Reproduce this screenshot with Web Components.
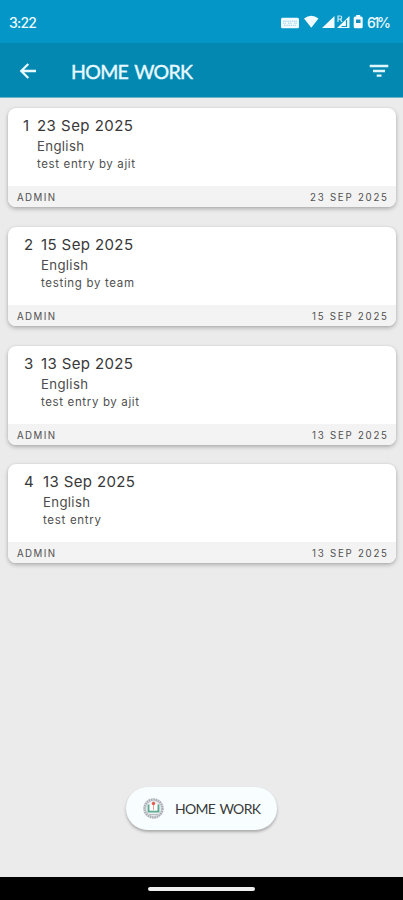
<!DOCTYPE html>
<html lang="en"><head><meta charset="utf-8"><title>Home Work</title>
<style>html,body{margin:0;height:100%;overflow:hidden}body{font-family:Inter,"Noto Sans",sans-serif}</style></head>
<body><home-screen></home-screen>
<script>
const attach=(el,html)=>{el.attachShadow({mode:'open'}).innerHTML=html};

/* A single line of text tracked out to the width given in its "w" attribute. */
customElements.define('track-text',class extends HTMLElement{
  connectedCallback(){
    if(this.shadowRoot)return;
    attach(this,`<style>:host{display:block;white-space:nowrap;width:max-content}span{display:inline-block}</style><span><slot></slot></span>`);
    const s=this.shadowRoot.querySelector('span'),n=this.textContent.length;
    const gap=(Number(this.getAttribute('w'))-s.getBoundingClientRect().width)/(n-1);
    s.style.letterSpacing=gap+'px';s.style.marginRight=-gap+'px';
  }
});

customElements.define('status-bar',class extends HTMLElement{
  connectedCallback(){attach(this,`<style>
:host{display:flex;height:43px;box-sizing:border-box;padding:1px 12px 0 9px;align-items:center;justify-content:space-between;background:#0396c6;color:#eefaff;font-size:14px;font-weight:500}
svg{display:block}.r{display:flex;align-items:center;gap:3px}
</style><track-text w="28">3:22</track-text><div class="r">
<svg width="84" height="16" viewBox="280 14 84 16" fill="#f2fbff">
<rect x="281" y="17.700" width="18" height="10.500" rx="1.500"/>
<path d="M283 21.200h14M283 23.200h3M288 23.200h4M294 23.200h3M284 25.300h12" stroke="#9ad2e6" stroke-width="1" stroke-dasharray="1.500 .7"/>
<path d="M304 18.500Q311.300 12.800 318.500 18.500L311.300 27.700Z"/>
<path d="M334.500 16v12h-12.500Z"/>
<path d="M349.500 16v12h-12.500Z"/>
<path d="M346.500 20v6.500h-5" fill="none" stroke="#0396c6" stroke-width="1.200"/>
<path d="M338 22v-6h2.200q1.500 0 1.500 1.600t-1.500 1.600H338m2.200 0 1.800 2.600" fill="none" stroke="#c6e9f4" stroke-width="1.200"/>
<path d="M356.200 15h4v1.500h1q1.500 0 1.500 1.500v8.700q0 1.500-1.500 1.500h-6q-1.500 0-1.500-1.500V18q0-1.500 1.500-1.500h1Z"/>
<path d="M356 19.500h4.500v3.500H356Z" fill="#168dba"/>
</svg><track-text w="24">61%</track-text></div>`)}
});

customElements.define('app-bar',class extends HTMLElement{
  connectedCallback(){attach(this,`<style>
:host{display:flex;height:55px;box-sizing:border-box;align-items:center;padding:2px 14px 0 19px;background:#0388b2;border-bottom:1px solid #70b2c6;color:#e8faff}
.t{flex:1;margin-left:34px;font:400 19.500px Lato,sans-serif;word-spacing:2px;-webkit-text-stroke:.4px}svg{display:block}
</style><svg width="18" height="18" viewBox="0 0 18 18" fill="none" stroke="#e9faff" stroke-width="2.300"><path d="M17 9H2.500M9.300 2 2.300 9l7 7"/></svg>
<div class="t"><track-text w="122">HOME WORK</track-text></div>
<svg width="20" height="16" viewBox="0 0 20 16" fill="none" stroke="#def6fc" stroke-width="2.300"><path d="M.7 3h18.600M4 8h12M7.700 12.600h4.800"/></svg>`)}
});

customElements.define('homework-card',class extends HTMLElement{
  connectedCallback(){
    const a=k=>this.getAttribute(k);
    attach(this,`<style>
:host{display:flex;flex-direction:column;height:99px;border-radius:8px;background:#fff;overflow:hidden;box-shadow:0 2px 4px rgba(0,0,0,.26),0 0 2px rgba(0,0,0,.08)}
.b{display:flex;flex:1;padding:9px 0 0 15px;color:#383838}
.n{font-size:15px;line-height:18px;width:${a('indent')}px;box-sizing:border-box;padding-left:${a('n')==='1'?0:1}px}
.s{font-size:13.200px;line-height:17px;margin-top:3px;color:#4c4c4c}.d{font-size:15px;line-height:18px}
.m{font-size:11.500px;line-height:15px;margin-top:2px;color:#505050}
.f{height:21px;display:flex;align-items:center;justify-content:space-between;padding:2px 9px 0;box-sizing:border-box;background:#f3f3f3;color:#505050;font-size:9.700px}
</style><div class="b"><div class="n">${a('n')}</div><div><track-text class="d" w="${a('dw')}">${a('date')}</track-text><track-text class="s" w="47">English</track-text><track-text class="m" w="${a('mw')}">${this.textContent||a('note')}</track-text></div></div>
<div class="f"><track-text w="38">ADMIN</track-text><track-text w="${a('fw')}">${a('date').toUpperCase()}</track-text></div>`);
  }
});

customElements.define('title-chip',class extends HTMLElement{
  connectedCallback(){attach(this,`<style>
:host{display:flex;align-items:center;width:151px;height:43px;box-sizing:border-box;padding:0 16px;border-radius:22px;background:#f8fdff;box-shadow:0 2px 3px rgba(0,0,0,.28);color:#3a3a3a;font:14px Lato,sans-serif;word-spacing:1.500px}
svg{margin-right:10px;flex:none}
</style><svg width="23" height="23" viewBox="0 0 23 23"><circle cx="11.500" cy="11.500" r="10.500" fill="#e2e5e8"/><circle cx="11.500" cy="11.500" r="8.900" fill="none" stroke="#a9adb3" stroke-width="2.400" stroke-dasharray="1.500 .8"/><circle cx="11.500" cy="11.500" r="7" fill="#eef2f2"/><path d="M6.500 7.500v7h10v-7" fill="none" stroke="#5fab93" stroke-width="1.800"/><path d="M8 7.500v6h7v-6" fill="#fff"/><path d="M11.500 8v5" stroke="#e7a090" stroke-width="1"/><circle cx="11.500" cy="6.500" r="1.700" fill="#e65a4c"/><path d="M7 17.500h9" stroke="#b8bdc2" stroke-width="1.200"/></svg><track-text w="86">HOME WORK</track-text>`)}
});

customElements.define('home-screen',class extends HTMLElement{
  connectedCallback(){attach(this,`<style>
:host{display:flex;flex-direction:column;height:900px;background:#ebebeb}
.list{display:grid;gap:19.800px;padding:10px 7px 0 8px}
.chip{margin-top:auto;margin-bottom:47px;padding-left:126px}
.nav{height:23px;background:#000;display:flex;justify-content:center;align-items:center}
.nav i{width:107px;height:4px;border-radius:2px;background:#eee}
</style><status-bar></status-bar><app-bar></app-bar><div class="list">
<homework-card n="1" indent="14" date="23 Sep 2025" dw="96" mw="98" fw="77" note="test entry by ajit"></homework-card>
<homework-card n="2" indent="18" date="15 Sep 2025" dw="92" mw="93" fw="75" note="testing by team"></homework-card>
<homework-card n="3" indent="18" date="13 Sep 2025" dw="92" mw="98" fw="75" note="test entry by ajit"></homework-card>
<homework-card n="4" indent="20" date="13 Sep 2025" dw="92" mw="58" fw="75" note="test entry"></homework-card>
</div><div class="chip"><title-chip></title-chip></div><div class="nav"><i></i></div>`)}
});
</script></body></html>
